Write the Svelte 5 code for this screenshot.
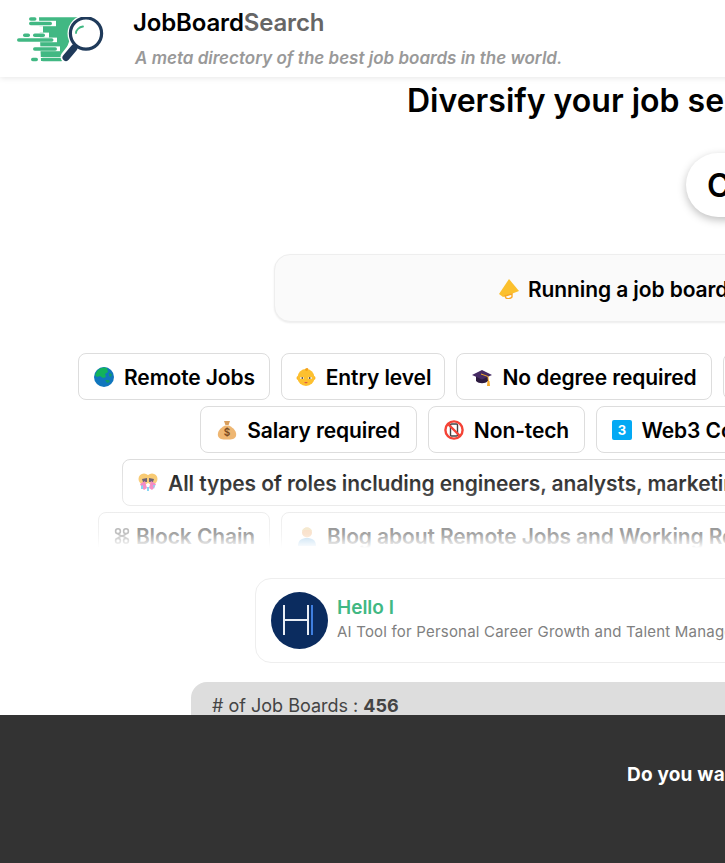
<script>
	const rows = [
		{
			left: 78,
			chips: [
				{ icon: 'globe', label: 'Remote Jobs', width: 192 },
				{ icon: 'baby', label: 'Entry level', width: 164 },
				{ icon: 'cap', label: 'No degree required', width: 256 },
				{ icon: 'none', label: 'Startups', width: 140 }
			]
		},
		{
			left: 200,
			chips: [
				{ icon: 'bag', label: 'Salary required', width: 216.5 },
				{ icon: 'notech', label: 'Non-tech', width: 157 },
				{ icon: 'three', label: 'Web3 Companies' }
			]
		},
		{
			left: 122,
			chips: [{ icon: 'people', label: 'All types of roles including engineers, analysts, marketing and more' }]
		},
		{
			left: 98,
			chips: [
				{ icon: 'chain', label: 'Block Chain', width: 172, tight: true },
				{ icon: 'man', label: 'Blog about Remote Jobs and Working Remotely' }
			]
		}
	];
</script>

{#snippet emoji(name)}
	<svg class="emoji" viewBox="0 0 20 20" aria-hidden="true">
		{#if name === 'globe'}
			<circle cx="10" cy="10" r="10" fill="#1076bd" />
			<path d="M3 4 C6 0 11 0 13 1 L14 5 L11 7 L12 10 L9 11 L6 9 L3 10 L1 8 Z" fill="#12b25c" />
			<path d="M11 13 L15 13 L16 15 L13 16 Z M15 6 L18 7 L17 10 L15 9 Z" fill="#0f9a6a" />
		{:else if name === 'baby'}
			<circle cx="2.5" cy="11" r="2" fill="#fbb11c" />
			<circle cx="17.5" cy="11" r="2" fill="#fbb11c" />
			<circle cx="10" cy="10.5" r="8.5" fill="#fdc02f" />
			<path d="M9 2 C11 0 13 1 12 3 C11 5 9 4 9 2 Z" fill="#f5a21a" />
			<ellipse cx="6" cy="11" rx="2" ry="1.1" fill="#fff" />
			<ellipse cx="14" cy="11" rx="2" ry="1.1" fill="#fff" />
			<circle cx="6.3" cy="11" r="0.9" fill="#5c4a3a" />
			<circle cx="13.7" cy="11" r="0.9" fill="#5c4a3a" />
			<path d="M8 15 H12 L10 16.6 Z" fill="#d9534f" />
		{:else if name === 'cap'}
			<path d="M4 9 V14 C7 17 13 17 16 14 V9 Z" fill="#2c1a3f" />
			<path d="M0 8 L10 3 L20 8 L10 12.5 Z" fill="#452a63" />
			<path d="M9 7 L16 9.5 L16.5 15" fill="none" stroke="#f0a92b" stroke-width="1" />
			<path d="M15.5 14 H17.5 L18 19 H15 Z" fill="#f6ab2e" />
		{:else if name === 'bag'}
			<path d="M7 1 L13 1 L11.6 5 L8.4 5 Z" fill="#d99e5c" />
			<path d="M8 5.5 H12 C17 8 20 12 19 16 C18 19 15 19.5 10 19.5 C5 19.5 2 19 1 16 C0 12 3 8 8 5.5 Z" fill="#eeb672" />
			<text x="10" y="16" text-anchor="middle" class="dollar">$</text>
		{:else if name === 'notech'}
			<rect x="6.5" y="4" width="7" height="12" rx="1" fill="#fff" stroke="#444" stroke-width="1.4" />
			<circle cx="10" cy="10" r="8.6" fill="none" stroke="#f44336" stroke-width="2.4" />
			<path d="M4 4 L16 16" stroke="#f44336" stroke-width="2.4" />
		{:else if name === 'three'}
			<rect x="0" y="0" width="20" height="20" rx="2" fill="#03a9f4" />
			<text x="10" y="15" text-anchor="middle" class="digit">3</text>
		{:else if name === 'people'}
			<circle cx="6" cy="6" r="5.5" fill="#f7c15a" />
			<circle cx="14" cy="6" r="5.5" fill="#f7c15a" />
			<path d="M4 6 L9 5 L9 9 L5 9 Z" fill="#4b3f55" />
			<path d="M16 6 L11 5 L11 9 L15 9 Z" fill="#4b3f55" />
			<path d="M2 11 L7 8 L9 15 L6 17 L4 15 Z" fill="#f06bb4" />
			<path d="M18 11 L13 8 L11 15 L14 17 L16 15 Z" fill="#f06bb4" />
			<path d="M3 13 L5 12 L5 16 L3 16 Z M15 12 L17 12 L16 16 Z M9 14 H11 V18 H9 Z" fill="#5dc8f0" />
		{:else if name === 'chain'}
			<g fill="none" stroke="#555" stroke-width="2">
				<ellipse cx="5" cy="4" rx="3" ry="3" />
				<ellipse cx="15" cy="4" rx="3" ry="3" />
				<ellipse cx="5" cy="16" rx="3" ry="3" />
				<ellipse cx="15" cy="16" rx="3" ry="3" />
				<path d="M5 7 C5 10 15 10 15 13 M15 7 C15 10 5 10 5 13" />
			</g>
		{:else if name === 'man'}
			<path d="M1 20 C1 14 5 12 10 12 C15 12 19 14 19 20 Z" fill="#5aa6dc" />
			<circle cx="10" cy="6.5" r="5" fill="#f0b27a" />
			<path d="M5 6 C5 0 15 0 15 6 L13 4 H7 Z" fill="#e6c98a" />
		{/if}
	</svg>
{/snippet}

<div class="page">
	<header class="top">
		<svg class="logo" viewBox="14 17 92 48" aria-hidden="true">
			<path d="M39 17.3 H78 L62 61 H41 Z" fill="#41b883" />
			<g fill="#fff">
				<rect x="38" y="20.8" width="18" height="5.4" />
				<rect x="38" y="26.2" width="5" height="6.4" />
				<rect x="38" y="32.6" width="11" height="5" />
				<rect x="38" y="37.6" width="19" height="4.6" />
				<rect x="38" y="46.4" width="22" height="4.8" />
				<rect x="38" y="57" width="24" height="1" />
			</g>
			<g fill="#41b883">
				<rect x="29" y="17.3" width="7.5" height="3.5" rx="1.75" />
				<rect x="29" y="21.8" width="23" height="3.5" rx="1.75" />
				<rect x="23" y="33.4" width="7" height="3.5" rx="1.75" />
				<rect x="33" y="33.4" width="12" height="3.5" rx="1.75" />
				<rect x="17" y="38.2" width="36.5" height="3.5" rx="1.75" />
				<rect x="33" y="47.2" width="24" height="3.5" rx="1.75" />
				<rect x="31" y="57.8" width="7" height="3.5" rx="1.75" />
				<rect x="41" y="57.8" width="22" height="3.5" rx="1.75" />
			</g>
			<circle cx="86" cy="33.5" r="18.5" fill="#fff" />
			<path d="M73 48 L66 57" stroke="#fff" stroke-width="11" stroke-linecap="round" />
			<circle cx="86" cy="33.5" r="15.6" fill="#fff" stroke="#1f3a5a" stroke-width="3.2" />
			<path d="M76 33 C76 30 79 27 83 26.5" fill="none" stroke="#41b883" stroke-width="1.8" stroke-linecap="round" />
			<path d="M74 48 L66 57.5" stroke="#1f3a5a" stroke-width="7" stroke-linecap="round" />
		</svg>
		<div class="brand">
			<div class="name">JobBoard<span>Search</span></div>
			<div class="tag">A meta directory of the best job boards in the world.</div>
		</div>
	</header>

	<main>
		<h1>Diversify your job search</h1>
		<button class="cta" type="button">Click here</button>

		<div class="notice">
			<svg class="emoji" viewBox="0 0 20 20" aria-hidden="true">
				<path d="M10 0 L20 12 L4 18 L0 15 Z" fill="#fbc02d" />
				<path d="M6 17 L13 15 L13 18 C11 20 8 20 7 19 Z" fill="none" stroke="#f9a825" stroke-width="1.4" />
			</svg>
			<span>Running a job board?</span>
		</div>

		<div class="chips">
			{#each rows as row}
				<div class="row" style:padding-left="{row.left}px">
					{#each row.chips as chip}
						<div class="chip" class:tight={chip.tight} style:width={chip.width ? `${chip.width}px` : null}>
							{@render emoji(chip.icon)}
							<span>{chip.label}</span>
						</div>
					{/each}
				</div>
			{/each}
		</div>

		<div class="sponsor">
			<svg class="avatar" viewBox="0 0 57 57" aria-hidden="true">
				<circle cx="28.5" cy="28.5" r="28.5" fill="#0b2c5f" />
				<path d="M13 13 V43 M13 28 H37 M37 13 V43" fill="none" stroke="#e8edf5" stroke-width="2" />
				<path d="M41 13 V43" fill="none" stroke="#3f7fe0" stroke-width="2" />
			</svg>
			<div class="copy">
				<div class="title">Hello I</div>
				<div class="sub">AI Tool for Personal Career Growth and Talent Management</div>
			</div>
		</div>

		<div class="stats">
			<span># of Job Boards : <b>456</b></span>
		</div>
	</main>

	<div class="banner">Do you want to hear about new job boards?</div>
</div>

<style>
	:global(body) {
		height: 100vh;
		overflow: hidden;
		background: #fff;
	}

	.page {
		width: 1920px;
		color: #000;
		font-family: Inter, 'Noto Sans', sans-serif;
	}

	.top {
		display: flex;
		align-items: flex-start;
		height: 77px;
		box-shadow: 0 1px 6px rgba(0, 0, 0, 0.1);
		position: relative;
	}

	.logo {
		width: 92px;
		height: 48px;
		margin: 17px 0 0 14px;
		flex: none;
	}

	.brand {
		margin: 8px 0 0 27px;
	}

	.name {
		font-size: 24px;
		font-weight: 600;
		letter-spacing: -0.15px;
		line-height: 30px;
	}

	.name span {
		color: #666;
	}

	.tag {
		margin: 8px 0 0 2px;
		color: #999;
		font-size: 17px;
		font-style: italic;
		font-weight: 600;
		line-height: 24px;
	}

	main {
		display: flex;
		flex-direction: column;
		align-items: center;
	}

	h1 {
		width: 1106px;
		margin: 5px 0 0;
		font-size: 32px;
		font-weight: 600;
		line-height: 38px;
		white-space: nowrap;
	}

	.cta {
		width: 548px;
		height: 64px;
		margin-top: 33px;
		padding: 0 0 0 21px;
		border: 0;
		border-radius: 32px;
		background: #fff;
		box-shadow: 0 3px 8px rgba(0, 0, 0, 0.25);
		color: #000;
		font: 600 32px Inter, sans-serif;
		text-align: left;
	}

	.notice {
		display: flex;
		align-items: center;
		gap: 9px;
		box-sizing: border-box;
		width: 1372px;
		height: 68px;
		margin-top: 37px;
		padding: 2px 0 0 224px;
		border: 1.5px solid #eee;
		border-radius: 16px;
		background: #fafafa;
		box-shadow: 0 1px 2px rgba(0, 0, 0, 0.08);
		font-size: 21px;
		font-weight: 600;
		letter-spacing: -0.1px;
	}

	.chips {
		position: relative;
		display: flex;
		flex-direction: column;
		gap: 6px;
		align-self: stretch;
		height: 195px;
		margin-top: 31px;
		overflow: hidden;
	}

	.chips::after {
		content: '';
		position: absolute;
		inset: 105px 0 0;
		background: linear-gradient(rgba(255, 255, 255, 0), rgba(255, 255, 255, 0.65) 85%, #fff);
	}

	.row {
		display: flex;
		gap: 11px;
	}

	.chip {
		display: flex;
		align-items: center;
		justify-content: center;
		gap: 10px;
		box-sizing: border-box;
		height: 47px;
		padding: 1px 14px 0 15px;
		border: 1.5px solid #ddd;
		border-radius: 8px;
		background: #fff;
		font-size: 21px;
		font-weight: 600;
		letter-spacing: -0.1px;
		white-space: nowrap;
	}

	.chip.tight {
		gap: 6px;
	}

	.chip.tight .emoji {
		width: 16px;
	}

	.emoji {
		width: 20px;
		height: 20px;
		flex: none;
	}

	.dollar {
		fill: #7a4a20;
		font-size: 10px;
		font-weight: 600;
	}

	.digit {
		fill: #fff;
		font-size: 13px;
		font-weight: 700;
	}

	.sponsor {
		display: flex;
		align-items: center;
		gap: 9px;
		box-sizing: border-box;
		width: 1410px;
		height: 85px;
		margin-top: 30px;
		padding-left: 15px;
		border: 1px solid #eee;
		border-radius: 16px;
	}

	.avatar {
		width: 57px;
		height: 57px;
		flex: none;
	}

	.copy {
		padding-bottom: 6px;
	}

	.title {
		color: #41b883;
		font-size: 19px;
		font-weight: 600;
		line-height: 27px;
	}

	.sub {
		color: #808080;
		font-size: 15px;
		letter-spacing: 0.2px;
		line-height: 21px;
	}

	.stats {
		box-sizing: border-box;
		width: 1538px;
		height: 180px;
		margin-top: 19px;
		padding: 12px 21px;
		border-radius: 16px;
		background: #ddd;
		color: #444;
		font-size: 18px;
		line-height: 24px;
	}

	.banner {
		position: fixed;
		right: 0;
		bottom: 0;
		left: 0;
		box-sizing: border-box;
		height: 148px;
		padding: 48px 0 0 627px;
		background: #333;
		color: #fff;
		font-size: 19px;
		font-weight: 700;
		letter-spacing: 0.2px;
		line-height: 24px;
		white-space: nowrap;
		overflow: hidden;
	}
</style>
